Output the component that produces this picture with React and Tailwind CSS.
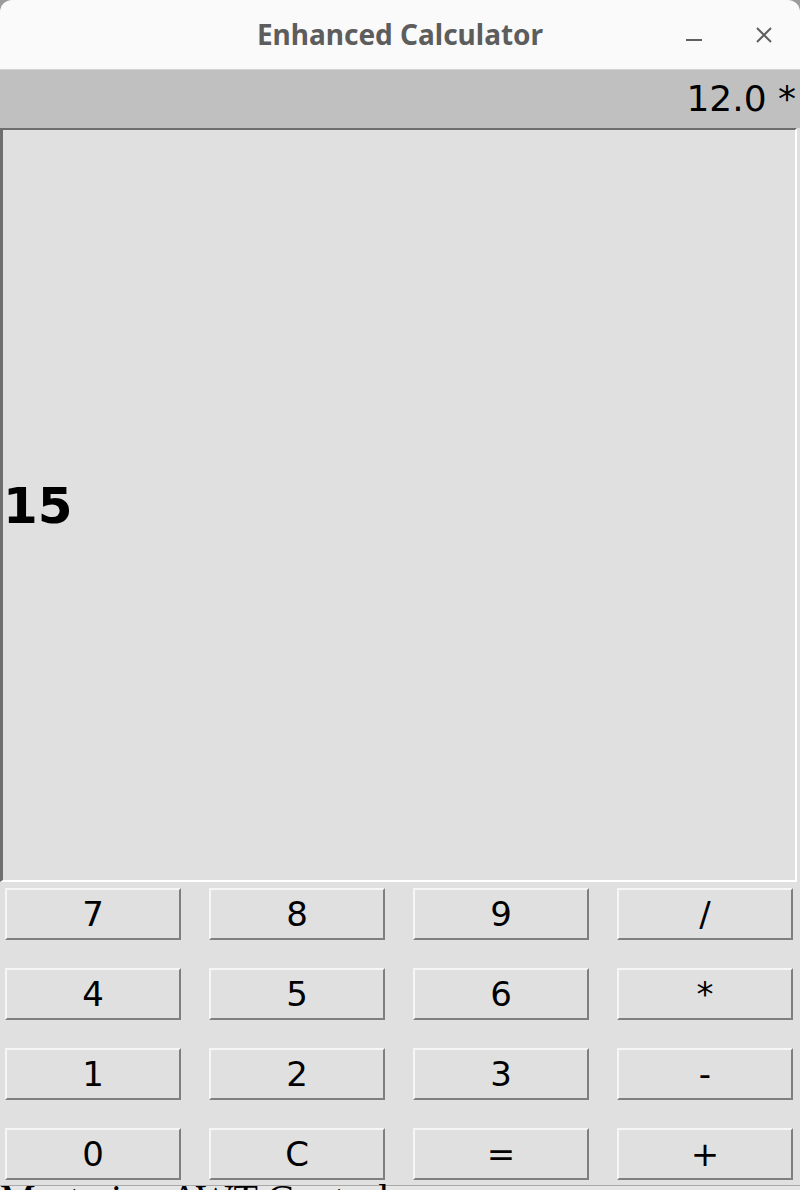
import React from "react";

const keys = ["7", "8", "9", "/", "4", "5", "6", "*", "1", "2", "3", "-", "0", "C", "=", "+"];

export default function App() {
  return (
    <div className="w-[800px] h-[1190px] overflow-hidden bg-[#e0e0e0] flex flex-col">
      <div className="bg-[#9c9c9c] shrink-0">
        <div className="h-[70px] bg-[#fafafa] rounded-t-[12px] border-b border-[#d4d4d4] relative flex items-center justify-center">
          <span
            className="text-[28px] leading-[36px] pb-[2px] font-bold text-[#5d5d5d] tracking-[0px]"
            style={{ fontFamily: '"Noto Sans", sans-serif' }}
          >
            Enhanced Calculator
          </span>
          <div className="absolute right-[26px] top-0 h-[69px] flex items-center gap-[50px]">
            <svg width="20" height="20" viewBox="0 0 20 20">
              <line x1="2" y1="15" x2="18" y2="15" stroke="#5f5f5f" strokeWidth="2" />
            </svg>
            <svg width="20" height="20" viewBox="0 0 20 20">
              <path d="M3 3 L17 17 M17 3 L3 17" stroke="#5f5f5f" strokeWidth="2" fill="none" />
            </svg>
          </div>
        </div>
      </div>
      <div
        className="shrink-0 h-[58px] bg-[#c0c0c0] flex items-center justify-end pr-[4px] text-[36px] leading-[36px] text-black"
        style={{ fontFamily: '"DejaVu Sans", sans-serif' }}
      >
        12.0 *
      </div>
      <div className="shrink-0 w-[797px] h-[754px] bg-[#e0e0e0] border-t-2 border-l-[3px] border-t-[#6e6e6e] border-l-[#6e6e6e] border-b-2 border-r-2 border-b-white border-r-white flex items-center">
        <span
          className="text-[50px] leading-[50px] pt-[2px] font-bold text-black"
          style={{ fontFamily: '"DejaVu Sans", sans-serif' }}
        >
          15
        </span>
      </div>
      <div className="shrink-0 pt-[6px] pl-[5px] grid grid-cols-[repeat(4,176px)] auto-rows-[52px] gap-x-[28px] gap-y-[28px]">
        {keys.map((k) => (
          <div
            key={k}
            className="bg-[#e0e0e0] border-t-2 border-l-2 border-t-[#f6f6f6] border-l-[#f6f6f6] border-b-2 border-r-2 border-b-[#7f7f7f] border-r-[#7f7f7f] flex items-center justify-center text-[34px] leading-[34px] text-black"
            style={{ fontFamily: '"DejaVu Sans", sans-serif' }}
          >
            {k}
          </div>
        ))}
      </div>
      <div className="shrink-0 mt-[5px] h-[1px] bg-[#a9a9a9]" />
      <div
        className="shrink-0 text-[40px] leading-[26px] text-black whitespace-nowrap bg-[#e6e6e6]"
        style={{ fontFamily: '"Liberation Serif", serif' }}
      >
        Mastering AWT Controls
      </div>
    </div>
  );
}
